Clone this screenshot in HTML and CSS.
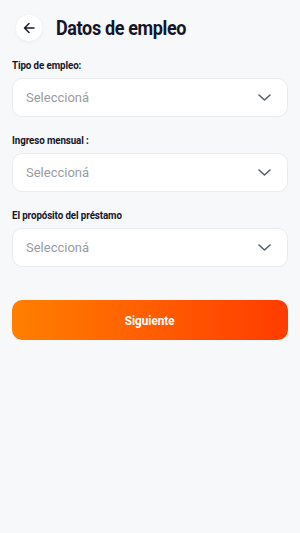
FILE: index.html
```html
<!DOCTYPE html>
<html lang="es">
<head>
<meta charset="utf-8">
<link rel="stylesheet" href="styles.css">
</head>
<body>
<div class="page">
  <header class="header">
    <button class="back" aria-label="Volver">
      <svg width="12" height="12" viewBox="0 0 12 12" fill="none" stroke="#1b1b2b" stroke-width="1.5" stroke-linecap="round" stroke-linejoin="round"><path d="M11 6H1.5M6 1.5L1.5 6L6 10.5"/></svg>
    </button>
    <h1 class="title">Datos de empleo</h1>
  </header>
  <form class="form">
    <div class="field">
      <label class="label">Tipo de empleo:</label>
      <div class="select"><span class="placeholder">Seleccioná</span>
        <svg class="chev" width="13" height="7" viewBox="0 0 13 7" fill="none" stroke="#56606f" stroke-width="1.6" stroke-linecap="round" stroke-linejoin="round"><path d="M1 1l5.5 5 5.5-5"/></svg>
      </div>
    </div>
    <div class="field">
      <label class="label">Ingreso mensual :</label>
      <div class="select"><span class="placeholder">Seleccioná</span>
        <svg class="chev" width="13" height="7" viewBox="0 0 13 7" fill="none" stroke="#56606f" stroke-width="1.6" stroke-linecap="round" stroke-linejoin="round"><path d="M1 1l5.5 5 5.5-5"/></svg>
      </div>
    </div>
    <div class="field">
      <label class="label">El propósito del préstamo</label>
      <div class="select"><span class="placeholder">Seleccioná</span>
        <svg class="chev" width="13" height="7" viewBox="0 0 13 7" fill="none" stroke="#56606f" stroke-width="1.6" stroke-linecap="round" stroke-linejoin="round"><path d="M1 1l5.5 5 5.5-5"/></svg>
      </div>
    </div>
    <button type="button" class="next"><span class="next-text">Siguiente</span></button>
  </form>
</div>
</body>
</html>
```
FILE: styles.css
```css
* { box-sizing: border-box; }
html, body { margin: 0; padding: 0; }
body {
  background: #f7f8fa;
  font-family: Roboto, "Liberation Sans", sans-serif;
  color: #15152a;
  width: 300px;
  min-height: 533px;
}
.page { padding: 15px 12px 0; }
.header {
  display: flex;
  align-items: center;
  gap: 14px;
  padding-left: 4px;
}
.back {
  width: 26px;
  height: 26px;
  flex: none;
  border-radius: 50%;
  border: none;
  background: #fff;
  box-shadow: 0 1px 4px rgba(0,0,0,0.06);
  display: flex;
  align-items: center;
  justify-content: center;
  padding: 0;
}
.title {
  margin: 0;
  font-size: 20px;
  font-weight: 700;
  letter-spacing: -0.4px;
  color: #15152a;
  transform: scaleX(0.9);
  transform-origin: left center;
}
.form { display: flex; flex-direction: column; margin-top: 18px; }
.field { display: flex; flex-direction: column; align-items: stretch; gap: 6px; margin-bottom: 17px; }
.label {
  align-self: flex-start;
  font-size: 10.5px;
  font-weight: 700;
  letter-spacing: -0.1px;
  color: #15152a;
  transform: scaleX(0.93);
  transform-origin: left center;
}
.select {
  height: 39px;
  background: #fff;
  border: 1px solid #e9ebef;
  border-radius: 10px;
  display: flex;
  align-items: center;
  justify-content: space-between;
  padding: 0 16px 0 13px;
}
.placeholder { font-size: 13px; color: #9a9ca3; }
.next {
  margin-top: 16px;
  height: 40px;
  border: none;
  border-radius: 10px;
  background: linear-gradient(90deg, #ff7f00 0%, #ff3c00 100%);
  color: #fff;
  font-family: Roboto, "Liberation Sans", sans-serif;
  font-size: 13px;
  font-weight: 700;
  display: flex;
  align-items: center;
  justify-content: center;
  padding: 0;
}
.next-text { display: inline-block; transform: scaleX(0.9); }
```
